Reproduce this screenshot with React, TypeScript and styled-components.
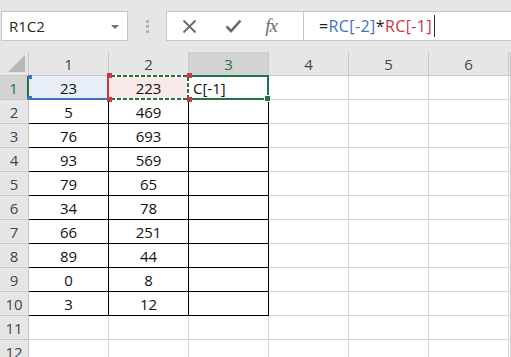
import styled, { createGlobalStyle, css } from 'styled-components'

const GlobalStyle = createGlobalStyle`
    html, body {
        margin: 0;
        padding: 0;
        background: #ffffff;
        overflow: hidden;
    }
    #root {
        width: 511px;
        height: 357px;
        overflow: hidden;
    }
`

const GREEN = '#217346'
const REF_BLUE = '#3b73c8'
const REF_RED = '#c8393f'

const Toolbar = styled.div`
    height: 52px;
    box-sizing: border-box;
    background: #e6e6e6;
    display: flex;
    align-items: flex-start;
    padding: 11px 0 0 1px;
    font-family: 'Open Sans', sans-serif;
`

const NameBox = styled.div`
    width: 127px;
    height: 30px;
    box-sizing: border-box;
    border: 1px solid #c6c6c6;
    background: #fff;
    display: flex;
    align-items: center;
    justify-content: space-between;
    padding: 0 8px 0 7px;
    font-size: 15px;
    color: #262626;
`

const DropArrow = styled.span`
    width: 0;
    height: 0;
    border-left: 4px solid transparent;
    border-right: 4px solid transparent;
    border-top: 4px solid #6e6e6e;
    margin-top: 2px;
`

const Grip = styled.div`
    width: 38px;
    height: 30px;
    display: flex;
    flex-direction: column;
    align-items: center;
    justify-content: center;
    gap: 2px;
`

const GripDot = styled.span`
    width: 3px;
    height: 3px;
    background: #b4b4b4;
`

const FormulaBox = styled.div`
    flex: 1;
    height: 30px;
    box-sizing: border-box;
    border: 1px solid #c6c6c6;
    border-right: none;
    background: #fff;
    display: flex;
`

const ButtonStrip = styled.div`
    width: 137px;
    box-sizing: border-box;
    border-right: 1px solid #c6c6c6;
    display: flex;
    align-items: center;
    padding-left: 14px;
`

const IconSlot = styled.div<{ $w: number }>`
    width: ${(p) => p.$w}px;
    height: 28px;
    display: flex;
    align-items: center;
    justify-content: center;
`

const Fx = styled.span`
    font-family: 'Liberation Serif', serif;
    font-style: italic;
    font-size: 19px;
    color: #6d6d6d;
    letter-spacing: -1px;
    margin-top: -1px;
`

const FormulaText = styled.div`
    flex: 1;
    display: flex;
    align-items: center;
    padding-left: 15px;
    font-size: 16px;
    letter-spacing: 0.4px;
    color: #222;
`

const Part = styled.span<{ $c: string }>`
    color: ${(p) => p.$c};
`

const Caret = styled.span`
    width: 1px;
    height: 22px;
    background: #333;
    margin-left: 2px;
`

const Sheet = styled.div`
    display: grid;
    grid-template-columns: 29px repeat(6, 80px) 1fr;
    grid-auto-rows: 24px;
    font-family: 'Open Sans', sans-serif;
    font-size: 15px;
`

const Corner = styled.div`
    background: #e6e6e6;
    border-right: 1px solid #c8c8c8;
    border-bottom: 1px solid #c8c8c8;
    box-sizing: border-box;
    position: relative;
    &::after {
        content: '';
        position: absolute;
        right: 3px;
        bottom: 3px;
        width: 0;
        height: 0;
        border-left: 17px solid transparent;
        border-bottom: 17px solid #b9b9b9;
    }
`

const ColHeader = styled.div<{ $active?: boolean }>`
    background: ${(p) => (p.$active ? '#d3d3d3' : '#e6e6e6')};
    color: ${(p) => (p.$active ? GREEN : '#444')};
    border-right: 1px solid #c8c8c8;
    border-bottom: 1px solid ${(p) => (p.$active ? GREEN : '#c8c8c8')};
    box-sizing: border-box;
    display: flex;
    align-items: center;
    justify-content: center;
    padding-top: 1px;
`

const RowHeader = styled.div<{ $active?: boolean }>`
    background: ${(p) => (p.$active ? '#d3d3d3' : '#e6e6e6')};
    color: ${(p) => (p.$active ? GREEN : '#444')};
    border-right: ${(p) => (p.$active ? `2px solid ${GREEN}` : '1px solid #c8c8c8')};
    border-bottom: 1px solid #c8c8c8;
    box-sizing: border-box;
    display: flex;
    align-items: center;
    justify-content: center;
`

const Cell = styled.div<{ $framed?: boolean; $left?: boolean; $fill?: string }>`
    position: relative;
    box-sizing: border-box;
    background: ${(p) => p.$fill ?? '#fff'};
    border-right: 1px solid ${(p) => (p.$framed ? '#000' : '#d4d4d4')};
    border-bottom: 1px solid ${(p) => (p.$framed ? '#000' : '#d4d4d4')};
    display: flex;
    align-items: center;
    justify-content: ${(p) => (p.$left ? 'flex-start' : 'center')};
    padding-left: ${(p) => (p.$left ? '4px' : '0')};
    color: #111;
`

const Handle = css`
    content: '';
    position: absolute;
    width: 4px;
    height: 4px;
`

const BlueRef = styled.div`
    position: absolute;
    z-index: 2;
    left: -1px;
    right: 0;
    top: -1px;
    bottom: -1px;
    border-bottom: 2px solid ${REF_BLUE};
    pointer-events: none;
    &::before {
        ${Handle};
        left: 0;
        top: 0;
        background: ${REF_BLUE};
    }
    &::after {
        ${Handle};
        left: 0;
        bottom: -2px;
        background: ${REF_BLUE};
    }
`

const RedRef = styled.div`
    position: absolute;
    z-index: 3;
    left: -2px;
    right: -2px;
    top: -1px;
    bottom: -1px;
    border-left: 2px solid ${REF_RED};
    pointer-events: none;
`

const Ants = styled.div<{ $side: 'top' | 'bottom' | 'right' }>`
    position: absolute;
    ${(p) =>
        p.$side === 'right'
            ? css`
                  right: 1px;
                  top: 2px;
                  bottom: 2px;
                  width: 2px;
                  background: repeating-linear-gradient(to bottom, ${GREEN} 0 4px, #fff 4px 6px);
              `
            : css`
                  left: 2px;
                  right: 2px;
                  ${p.$side}: 0;
                  height: 2px;
                  background: repeating-linear-gradient(to right, ${GREEN} 0 4px, #fff 4px 6px);
              `}
`

const RedCorner = styled.span<{ $x: 'left' | 'right'; $y: 'top' | 'bottom' }>`
    position: absolute;
    width: 5px;
    height: 5px;
    background: ${REF_RED};
    ${(p) => p.$x}: -2px;
    ${(p) => p.$y}: -2px;
`

const ActiveBox = styled.div`
    position: absolute;
    z-index: 2;
    left: -1px;
    right: -1px;
    top: -1px;
    bottom: -1px;
    border: 2px solid ${GREEN};
    border-left: none;
    pointer-events: none;
    &::after {
        content: '';
        position: absolute;
        right: -4px;
        bottom: -4px;
        width: 5px;
        height: 5px;
        background: ${GREEN};
        border: 1px solid #fff;
    }
`

const data: [number, number][] = [
    [23, 223],
    [5, 469],
    [76, 693],
    [93, 569],
    [79, 65],
    [34, 78],
    [66, 251],
    [89, 44],
    [0, 8],
    [3, 12],
]

const CloseIcon = () => (
    <svg width="15" height="15" viewBox="0 0 15 15">
        <path d="M1.5 1.5 L13.5 13.5 M13.5 1.5 L1.5 13.5" stroke="#6a6a6a" strokeWidth="1.8" fill="none" />
    </svg>
)

const CheckIcon = () => (
    <svg width="17" height="14" viewBox="0 0 17 14">
        <path d="M1.5 7.5 L6 12 L15.5 1.5" stroke="#6a6a6a" strokeWidth="2.6" fill="none" />
    </svg>
)

export default function App() {
    const rows = Array.from({ length: 12 }, (_, i) => i + 1)

    return (
        <>
            <GlobalStyle />
            <Toolbar>
                <NameBox>
                    R1C2
                    <DropArrow />
                </NameBox>
                <Grip>
                    <GripDot />
                    <GripDot />
                    <GripDot />
                </Grip>
                <FormulaBox>
                    <ButtonStrip>
                        <IconSlot $w={16}>
                            <CloseIcon />
                        </IconSlot>
                        <IconSlot $w={27} />
                        <IconSlot $w={18}>
                            <CheckIcon />
                        </IconSlot>
                        <IconSlot $w={19} />
                        <IconSlot $w={20}>
                            <Fx>fx</Fx>
                        </IconSlot>
                    </ButtonStrip>
                    <FormulaText>
                        <Part $c="#222">=</Part>
                        <Part $c={REF_BLUE}>RC[-2]</Part>
                        <Part $c="#222">*</Part>
                        <Part $c={REF_RED}>RC[-1]</Part>
                        <Caret />
                    </FormulaText>
                </FormulaBox>
            </Toolbar>
            <Sheet>
                <Corner />
                {[1, 2, 3, 4, 5, 6].map((c) => (
                    <ColHeader key={c} $active={c === 3}>
                        {c}
                    </ColHeader>
                ))}
                <ColHeader />
                {rows.map((r) => {
                    const vals = data[r - 1]
                    const framed = r <= 10
                    return [
                        <RowHeader key={`h${r}`} $active={r === 1}>
                            {r}
                        </RowHeader>,
                        <Cell key={`a${r}`} $framed={framed} $fill={r === 1 ? '#e8eef8' : undefined}>
                            {vals?.[0]}
                            {r === 1 && <BlueRef />}
                        </Cell>,
                        <Cell key={`b${r}`} $framed={framed} $fill={r === 1 ? '#f9e9e9' : undefined}>
                            {vals?.[1]}
                            {r === 1 && (
                                <RedRef>
                                    <Ants $side="top" />
                                    <Ants $side="bottom" />
                                    <Ants $side="right" />
                                    <RedCorner $x="left" $y="top" />
                                    <RedCorner $x="left" $y="bottom" />
                                    <RedCorner $x="right" $y="top" />
                                    <RedCorner $x="right" $y="bottom" />
                                </RedRef>
                            )}
                        </Cell>,
                        <Cell key={`c${r}`} $framed={framed} $left>
                            {r === 1 && 'C[-1]'}
                            {r === 1 && <ActiveBox />}
                        </Cell>,
                        <Cell key={`d${r}`} />,
                        <Cell key={`e${r}`} />,
                        <Cell key={`f${r}`} />,
                        <Cell key={`g${r}`} />,
                    ]
                })}
            </Sheet>
        </>
    )
}
